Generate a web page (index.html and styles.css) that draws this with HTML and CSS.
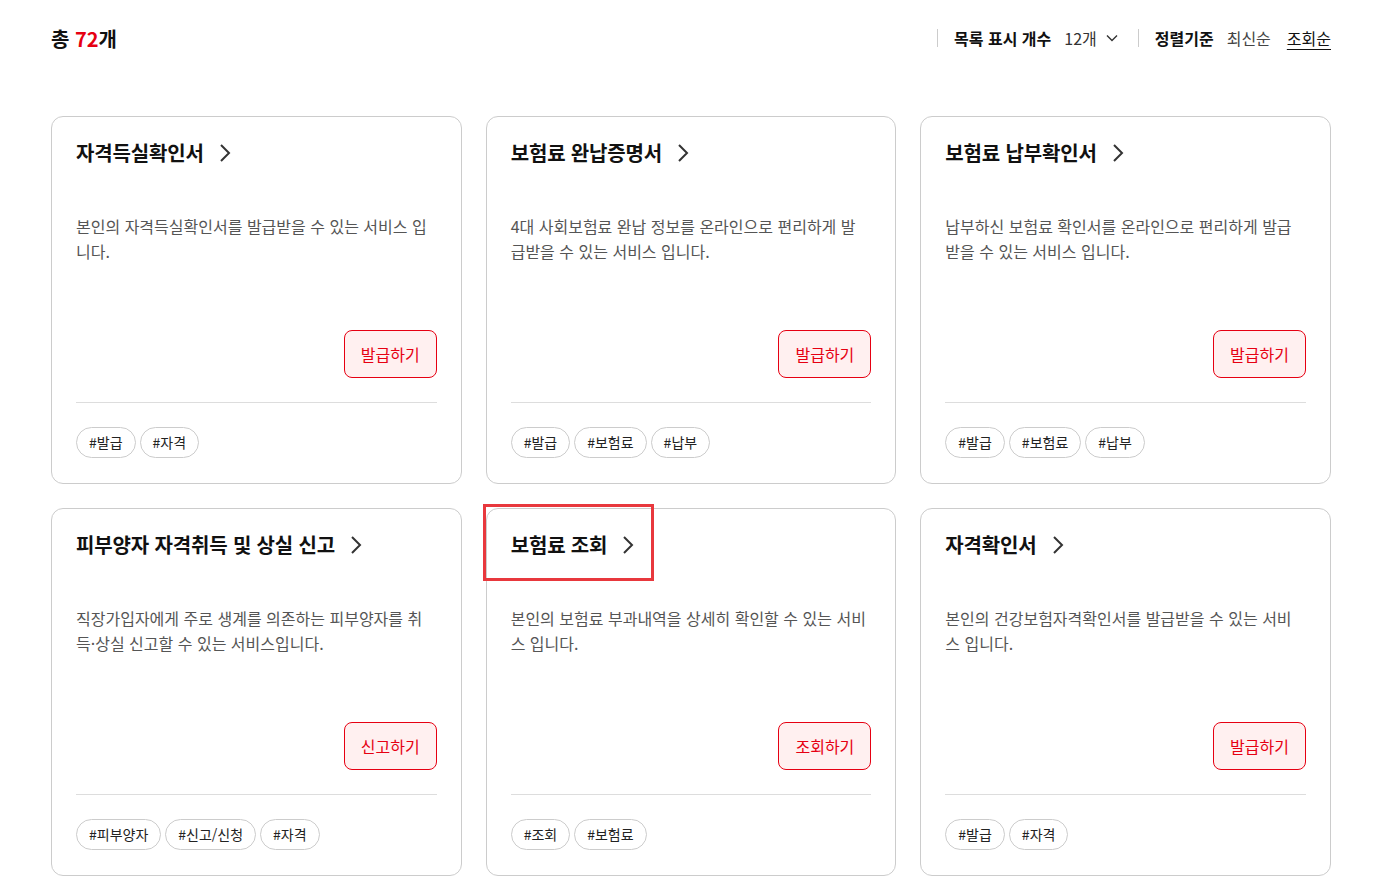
FILE: index.html
```html
<!DOCTYPE html>
<html lang="ko">
  <head>
    <meta charset="utf-8">
    <title>서비스 목록</title>
    <link rel="stylesheet" href="styles.css">
  </head>
  <body>
    <div class="wrap">
      <div class="list-head">
        <p class="total">총 <em>72</em>개</p>
        <div class="list-opts">
          <div class="opt">
            <strong>목록 표시 개수</strong>
            <button class="count-select">12개
              <svg width="12" height="8" viewBox="0 0 12 8"><path d="M1 1.5l5 5 5-5" fill="none" stroke="#333" stroke-width="1.4"/></svg>
            </button>
          </div>
          <div class="opt">
            <strong>정렬기준</strong>
            <a class="sort">최신순</a>
            <a class="sort on">조회순</a>
          </div>
        </div>
      </div>

      <ul class="cards">
        <li class="card">
          <a class="card-title">자격득실확인서
            <svg width="12" height="20" viewBox="0 0 12 20"><path d="M2 2l8 8-8 8" fill="none" stroke="#333" stroke-width="2"/></svg>
          </a>
          <p class="desc">본인의 자격득실확인서를 발급받을 수 있는 서비스 입니다.</p>
          <button class="action">발급하기</button>
          <div class="tags"><span>#발급</span><span>#자격</span></div>
        </li>
        <li class="card">
          <a class="card-title">보험료 완납증명서
            <svg width="12" height="20" viewBox="0 0 12 20"><path d="M2 2l8 8-8 8" fill="none" stroke="#333" stroke-width="2"/></svg>
          </a>
          <p class="desc">4대 사회보험료 완납 정보를 온라인으로 편리하게 발급받을 수 있는 서비스 입니다.</p>
          <button class="action">발급하기</button>
          <div class="tags"><span>#발급</span><span>#보험료</span><span>#납부</span></div>
        </li>
        <li class="card">
          <a class="card-title">보험료 납부확인서
            <svg width="12" height="20" viewBox="0 0 12 20"><path d="M2 2l8 8-8 8" fill="none" stroke="#333" stroke-width="2"/></svg>
          </a>
          <p class="desc">납부하신 보험료 확인서를 온라인으로 편리하게 발급받을 수 있는 서비스 입니다.</p>
          <button class="action">발급하기</button>
          <div class="tags"><span>#발급</span><span>#보험료</span><span>#납부</span></div>
        </li>
        <li class="card">
          <a class="card-title">피부양자 자격취득 및 상실 신고
            <svg width="12" height="20" viewBox="0 0 12 20"><path d="M2 2l8 8-8 8" fill="none" stroke="#333" stroke-width="2"/></svg>
          </a>
          <p class="desc">직장가입자에게 주로 생계를 의존하는 피부양자를 취득·상실 신고할 수 있는 서비스입니다.</p>
          <button class="action">신고하기</button>
          <div class="tags"><span>#피부양자</span><span>#신고/신청</span><span>#자격</span></div>
        </li>
        <li class="card">
          <!-- highlight box from the capture -->
          <div class="mark"></div>
          <a class="card-title">보험료 조회
            <svg width="12" height="20" viewBox="0 0 12 20"><path d="M2 2l8 8-8 8" fill="none" stroke="#333" stroke-width="2"/></svg>
          </a>
          <p class="desc">본인의 보험료 부과내역을 상세히 확인할 수 있는 서비스 입니다.</p>
          <button class="action">조회하기</button>
          <div class="tags"><span>#조회</span><span>#보험료</span></div>
        </li>
        <li class="card">
          <a class="card-title">자격확인서
            <svg width="12" height="20" viewBox="0 0 12 20"><path d="M2 2l8 8-8 8" fill="none" stroke="#333" stroke-width="2"/></svg>
          </a>
          <p class="desc">본인의 건강보험자격확인서를 발급받을 수 있는 서비스 입니다.</p>
          <button class="action">발급하기</button>
          <div class="tags"><span>#발급</span><span>#자격</span></div>
        </li>
      </ul>
    </div>
  </body>
</html>
```

FILE: styles.css
```css
body {
  margin: 0;
  font-family: "Noto Sans CJK KR", "Noto Sans", sans-serif;
  color: #111;
  background: #fff;
}
.wrap {
  width: 1280px;
  margin-left: 51px;
}
.list-head {
  display: flex;
  justify-content: space-between;
  align-items: center;
  height: 36px;
  padding-top: 20px;
  margin-bottom: 60px;
}
.total {
  margin: 0;
  font-size: 20px;
  font-weight: 700;
}
.total em {
  font-style: normal;
  color: #e60012;
}
.list-opts {
  display: flex;
  align-items: center;
}
.opt {
  display: flex;
  align-items: center;
  gap: 13px;
  padding-left: 16px;
  border-left: 1px solid #ccc;
  line-height: 18px;
  font-size: 16px;
}
.opt + .opt {
  margin-left: 20px;
}
.opt strong {
  font-weight: 700;
  color: #111;
}
.count-select {
  display: flex;
  align-items: center;
  gap: 9px;
  padding: 0;
  border: 0;
  background: none;
  font: inherit;
  color: #333;
}
.sort {
  color: #444;
}
.sort + .sort {
  margin-left: 3px;
}
.sort.on {
  color: #111;
  text-decoration: underline;
  text-underline-offset: 4px;
}
.cards {
  list-style: none;
  margin: 0;
  padding: 0;
  display: grid;
  grid-template-columns: repeat(3, 1fr);
  gap: 24px;
}
.card {
  position: relative;
  height: 368px;
  box-sizing: border-box;
  border: 1px solid #ccc;
  border-radius: 12px;
  padding: 21px 24px 25px;
  display: flex;
  flex-direction: column;
}
.card-title {
  display: flex;
  align-items: center;
  gap: 15px;
  font-size: 20px;
  font-weight: 700;
  line-height: 30px;
  letter-spacing: -0.15px;
  color: #111;
}
.desc {
  margin: 46px 0 0;
  padding-right: 2px;
  font-size: 16px;
  line-height: 25px;
  color: #555;
  word-break: break-all;
}
.action {
  align-self: flex-end;
  margin-top: auto;
  height: 48px;
  padding: 0 16px;
  border: 1px solid #e60012;
  border-radius: 8px;
  background: #fff0f0;
  color: #e60012;
  font: inherit;
  font-size: 16px;
}
.tags {
  display: flex;
  gap: 4px;
  margin-top: 24px;
  padding-top: 24px;
  border-top: 1px solid #ddd;
}
.tags span {
  height: 31px;
  box-sizing: border-box;
  padding: 0 12px;
  border: 1px solid #ccc;
  border-radius: 16px;
  font-size: 14px;
  line-height: 29px;
  color: #222;
}
.mark {
  position: absolute;
  left: -4px;
  top: -5px;
  width: 171px;
  height: 77px;
  box-sizing: border-box;
  border: 3px solid #e8383d;
}
```
